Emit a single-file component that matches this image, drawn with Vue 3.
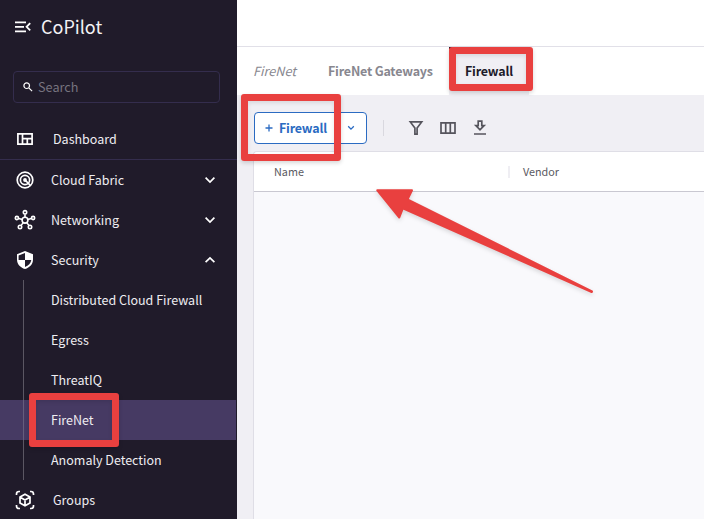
<script setup>
const security = ['Distributed Cloud Firewall', 'Egress', 'ThreatIQ', 'FireNet', 'Anomaly Detection']
const active = 'FireNet'
</script>

<template>
  <div class="app">
    <aside class="sidebar">
      <header class="brand">
        <svg class="menu" width="16" height="12" viewBox="0 0 16 12" fill="none" stroke="currentColor" stroke-width="1.8">
          <path d="M0 1.300h11M0 5.800h9M0 10.300h11M15.200 2.200L11.600 5.800l3.600 3.600" />
        </svg>
        <span class="logo">CoPilot</span>
      </header>
      <div class="search">
        <svg width="10" height="10" viewBox="0 0 10 10" fill="none" stroke="currentColor" stroke-width="1.2">
          <circle cx="3.700" cy="3.700" r="2.800" /><path d="M5.800 5.800l3.300 3.300" />
        </svg>
        <span>Search</span>
      </div>
      <nav>
        <div class="row dash">
          <svg width="20" height="20" viewBox="0 0 20 20" fill="none" stroke="currentColor" stroke-width="1.700">
            <path d="M2.900 4.800h14.200v10.400H2.900zM7.500 4.800v10.400M7.500 9.700h9.600M12.300 9.700v5.500" />
          </svg>
          <span>Dashboard</span>
        </div>
        <div class="row">
          <svg width="20" height="20" viewBox="0 0 20 20" fill="none" stroke="currentColor" stroke-width="1.700">
            <circle cx="10" cy="10" r="7.800" /><circle cx="10" cy="10" r="4.600" />
            <circle cx="10" cy="10" r="1.900" fill="currentColor" stroke="none" /><path d="M10 10l5.300 5.300" />
          </svg>
          <span class="label">Cloud Fabric</span>
          <svg class="chev" width="12" height="8" viewBox="0 0 12 8"><path d="M1.600 1.700L6 6l4.400-4.300" /></svg>
        </div>
        <div class="row">
          <svg width="20" height="20" viewBox="0 0 20 20" fill="none" stroke="currentColor" stroke-width="1.600" overflow="visible">
            <circle cx="10" cy="10.200" r="2.900" /><circle cx="10" cy="2.300" r="1.700" />
            <circle cx="1.900" cy="8" r="1.600" /><circle cx="18.100" cy="8" r="1.600" />
            <circle cx="5" cy="17" r="1.700" /><circle cx="15" cy="17" r="1.700" />
            <path d="M10 4.300v3M3.800 8.500l3.400.9M16.200 8.500l-3.400.9M6 15.600l2.200-3M14 15.600l-2.200-3" />
          </svg>
          <span class="label">Networking</span>
          <svg class="chev" width="12" height="8" viewBox="0 0 12 8"><path d="M1.600 1.700L6 6l4.400-4.300" /></svg>
        </div>
        <div class="row">
          <svg width="20" height="20" viewBox="0 0 20 20">
            <path fill="currentColor" fill-rule="evenodd" d="M10 .9l8 3.300v5.300c0 4.500-3.200 8.200-8 9.500-4.800-1.300-8-5-8-9.500V4.200zM10 2.900L3.600 5.500V10H10zM10 10v7c3.500-1.200 5.800-3.700 6.300-7z" />
          </svg>
          <span class="label">Security</span>
          <svg class="chev" width="12" height="8" viewBox="0 0 12 8"><path d="M1.600 6.200L6 1.900l4.400 4.300" /></svg>
        </div>
        <div class="group">
          <div v-for="item in security" :key="item" class="sub" :class="{ active: item === active }">{{ item }}</div>
        </div>
        <div class="row groups">
          <svg width="20" height="20" viewBox="0 0 20 20" fill="none" stroke="currentColor" stroke-width="1.700">
            <path d="M1.500 5V4q0-2.500 2.500-2.500H5M15 1.500h1q2.500 0 2.500 2.500v1M18.500 15v1q0 2.500-2.500 2.500h-1M5 18.500H4q-2.500 0-2.500-2.500v-1M10 4.300l5 2.800v5.800L10 15.700l-5-2.800V7.100zM5.200 7.200L10 10l4.800-2.800M10 10v5.400" />
          </svg>
          <span>Groups</span>
        </div>
      </nav>
    </aside>

    <main class="main">
      <div class="topbar"></div>
      <div class="tabs">
        <span class="tab first">FireNet</span>
        <span class="tab gateways">FireNet Gateways</span>
        <span class="tab current">Firewall</span>
      </div>
      <div class="toolbar">
        <button class="add">
          <svg width="8" height="8" viewBox="0 0 8 8"><path d="M4 .5v7M.5 4h7" /></svg>
          <span>Firewall</span>
          <svg class="drop" width="8" height="6" viewBox="0 0 8 6"><path d="M1.200 1.300L4 4.100l2.800-2.800" /></svg>
        </button>
        <i class="divider"></i>
        <svg class="tool" width="16" height="16" viewBox="0 0 16 16">
          <path d="M2.300 1.900h11.400L9.100 8v6.200H6.900V8z" />
        </svg>
        <svg class="tool" width="16" height="16" viewBox="0 0 16 16">
          <path d="M1 2.900h14v10.200H1zM5.700 2.900v10.200M10.300 2.900v10.200" />
        </svg>
        <svg class="tool" width="16" height="16" viewBox="0 0 16 16">
          <path d="M6.200 1.200h3.600v4.500h2.300L8 9.800 3.900 5.700h2.300zM2 14h12" />
        </svg>
      </div>
      <div class="table">
        <div class="thead">
          <div class="th name">Name</div>
          <div class="th vendor">Vendor</div>
        </div>
      </div>
    </main>

    <div class="mark mark-tab"></div>
    <div class="mark mark-add"></div>
    <div class="mark mark-nav"></div>
    <svg class="arrow" width="230" height="116" viewBox="370 184 230 116">
      <path d="M377.300 190.300H412L407.500 199.500 592 291.300 591.700 292 402.800 208.300 399.300 217.500z" />
    </svg>
  </div>
</template>

<style>
body { overflow: hidden; }
</style>

<style scoped>
* { box-sizing: border-box; }
.app {
  position: relative; display: flex; width: 704px; height: 519px; overflow: hidden;
  font-family: "Noto Sans CJK SC", "Noto Sans", sans-serif; font-size: 12.5px; line-height: 20px; color: #5b5a62;
}
.sidebar { width: 237px; flex: none; height: 520px; background: #201b2a; color: #fff; }
.brand { display: flex; align-items: center; height: 71px; padding: 0 0 17px 15px; gap: 10px; }
.logo { font-size: 18px; color: #f3f2f5; padding-bottom: 2px; }
.search {
  display: flex; align-items: center; gap: 5px; width: 207px; height: 32px; margin-left: 13px; padding-left: 9px;
  border: 1px solid #342d4d; border-radius: 4px;
}
.search span { color: #77737f; font-size: 12.7px; }
nav { padding-top: 16px; color: #fff; }
.row { display: flex; align-items: center; height: 40px; padding: 0 21px 0 15px; gap: 16px; color: #fff; }
.row span { color: #eeedf1; }
.row .label { flex: 1; }
.row.dash { height: 41px; border-bottom: 1px solid #342d4d; gap: 18px; }
.row.groups { gap: 18px; }
.chev { fill: none; stroke: #fff; stroke-width: 1.7; }
.group { background: linear-gradient(#5b5763, #5b5763) 23px 0 / 1px 100% no-repeat; }
.sub { height: 40px; line-height: 40px; padding-left: 51px; color: #eeedf1; margin-right: 1px; }
.sub.active { background: linear-gradient(#665d7c, #665d7c) 23px 0 / 1px 100% no-repeat #463a63; }
.main { flex: 1; min-width: 0; display: flex; flex-direction: column; background: #f0eff4; }
.topbar { height: 47px; background: #fff; border-bottom: 1px solid #e1e0e8; }
.tabs { display: flex; height: 48px; line-height: 48px; background: #fff; padding-left: 16px; }
.tab { color: #88878f; font-weight: 700; letter-spacing: -0.2px; }
.first { font-weight: 400; font-style: italic; width: 75px; letter-spacing: 0; font-size: 12.7px; }
.gateways { width: 121px; }
.current { width: 80px; padding-left: 16px; background: #f0eff4; color: #201b2a; border-top: 2px solid #201b2a; line-height: 44px; }
.toolbar { display: flex; align-items: center; height: 56px; padding: 9px 0 0 17px; }
.add {
  display: flex; align-items: center; width: 113px; height: 32px; padding: 0 0 0 10px; border: 1px solid #2b6bc2;
  border-radius: 4px; background: #fff; color: #2b6bc2; font: 700 12.5px/20px "Noto Sans CJK SC", sans-serif;
  letter-spacing: -0.2px;
}
.add span { margin-left: 6px; width: 68px; text-align: left; }
.add svg { fill: none; stroke: #2b6bc2; stroke-width: 1.3; }
.divider { width: 1px; height: 16px; margin: 0 24px 0 16px; background: #d9d8df; }
.tool { fill: none; stroke: #55545c; stroke-width: 1.7; margin-right: 16px; }
.table { flex: 1; margin-left: 16px; border-left: 1px solid #dfdee6; border-top: 1px solid #dfdee6; background: #f9f9fc; border-top-left-radius: 4px; }
.thead { display: flex; align-items: center; height: 40px; background: #fff; border-bottom: 1px solid #c9c8d1; font-size: 10.8px; border-top-left-radius: 4px; }
.name { width: 254px; padding: 0 0 1px 20px; }
.vendor { height: 12px; line-height: 11px; padding-left: 13px; border-left: 2px solid #efeef3; }
.mark { position: absolute; border: 7px solid #e9403f; border-radius: 3px; box-shadow: 0 2px 4px rgba(0,0,0,.16), inset 0 2px 4px rgba(0,0,0,.1); }
.mark-tab { left: 449px; top: 47px; width: 84px; height: 44px; }
.mark-add { left: 241px; top: 94px; width: 100px; height: 67px; }
.mark-nav { left: 29px; top: 393px; width: 90px; height: 54px; }
.arrow { position: absolute; left: 370px; top: 184px; fill: #e9403f; stroke: #e9403f; stroke-width: 2; stroke-linejoin: round; filter: drop-shadow(0 2px 2px rgba(0,0,0,.14)); }
</style>
